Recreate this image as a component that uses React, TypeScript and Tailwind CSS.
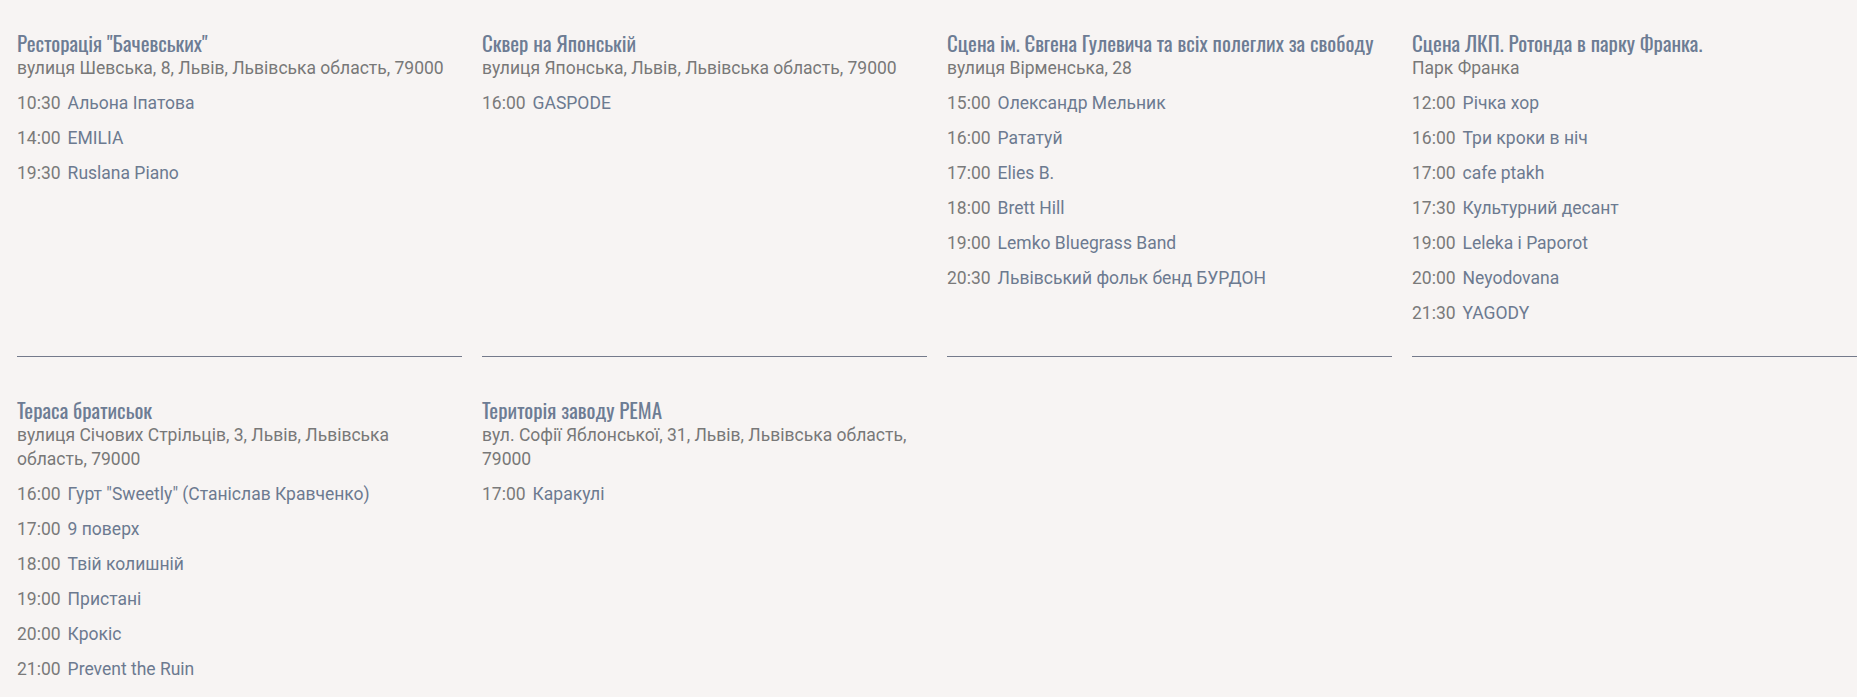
import React from "react";

type Venue = {
  title: string;
  address: string;
  items: [string, string][];
};

const row1: Venue[] = [
  {
    title: 'Ресторація "Бачевських"',
    address: "вулиця Шевська, 8, Львів, Львівська область, 79000",
    items: [
      ["10:30", "Альона Іпатова"],
      ["14:00", "EMILIA"],
      ["19:30", "Ruslana Piano"],
    ],
  },
  {
    title: "Сквер на Японській",
    address: "вулиця Японська, Львів, Львівська область, 79000",
    items: [["16:00", "GASPODE"]],
  },
  {
    title: "Сцена ім. Євгена Гулевича та всіх полеглих за свободу",
    address: "вулиця Вірменська, 28",
    items: [
      ["15:00", "Олександр Мельник"],
      ["16:00", "Рататуй"],
      ["17:00", "Elies B."],
      ["18:00", "Brett Hill"],
      ["19:00", "Lemko Bluegrass Band"],
      ["20:30", "Львівський фольк бенд БУРДОН"],
    ],
  },
  {
    title: "Сцена ЛКП. Ротонда в парку Франка.",
    address: "Парк Франка",
    items: [
      ["12:00", "Річка хор"],
      ["16:00", "Три кроки в ніч"],
      ["17:00", "cafe ptakh"],
      ["17:30", "Культурний десант"],
      ["19:00", "Leleka i Paporot"],
      ["20:00", "Neyodovana"],
      ["21:30", "YAGODY"],
    ],
  },
];

const row2: Venue[] = [
  {
    title: "Тераса братисьок",
    address: "вулиця Січових Стрільців, 3, Львів, Львівська область, 79000",
    items: [
      ["16:00", 'Гурт "Sweetly" (Станіслав Кравченко)'],
      ["17:00", "9 поверх"],
      ["18:00", "Твій колишній"],
      ["19:00", "Пристані"],
      ["20:00", "Крокіс"],
      ["21:00", "Prevent the Ruin"],
    ],
  },
  {
    title: "Територія заводу РЕМА",
    address: "вул. Софії Яблонської, 31, Львів, Львівська область, 79000",
    items: [["17:00", "Каракулі"]],
  },
];

function Card({ v }: { v: Venue }) {
  return (
    <div className="border-b border-[#747a8b] pb-[31px]">
      <div
        className="text-[21px] leading-[27px] text-[#6d7c94]"
        style={{ fontFamily: '"Oswald", "Liberation Sans Narrow", "Roboto", sans-serif' }}
      >
        {v.title}
      </div>
      <div className="text-[17.5px] leading-6 text-[#787878]">{v.address}</div>
      {v.items.map(([t, n], i) => (
        <div key={i} className="mt-[11px] flex gap-[7px] text-[17.5px] leading-6">
          <span className="text-[#7a7a7a]">{t}</span>
          <span className="text-[#6c7a90]">{n}</span>
        </div>
      ))}
    </div>
  );
}

export default function App() {
  return (
    <div
      className="min-h-[697px] w-full bg-[#f7f4f3] pl-[17px] pt-[29px]"
      style={{ fontFamily: 'Roboto, "Noto Sans", sans-serif' }}
    >
      <div className="grid grid-cols-4 gap-x-5">
        {row1.map((v, i) => (
          <Card key={i} v={v} />
        ))}
      </div>
      <div className="mt-[39px] grid grid-cols-4 gap-x-5">
        {row2.map((v, i) => (
          <Card key={i} v={v} />
        ))}
      </div>
    </div>
  );
}
